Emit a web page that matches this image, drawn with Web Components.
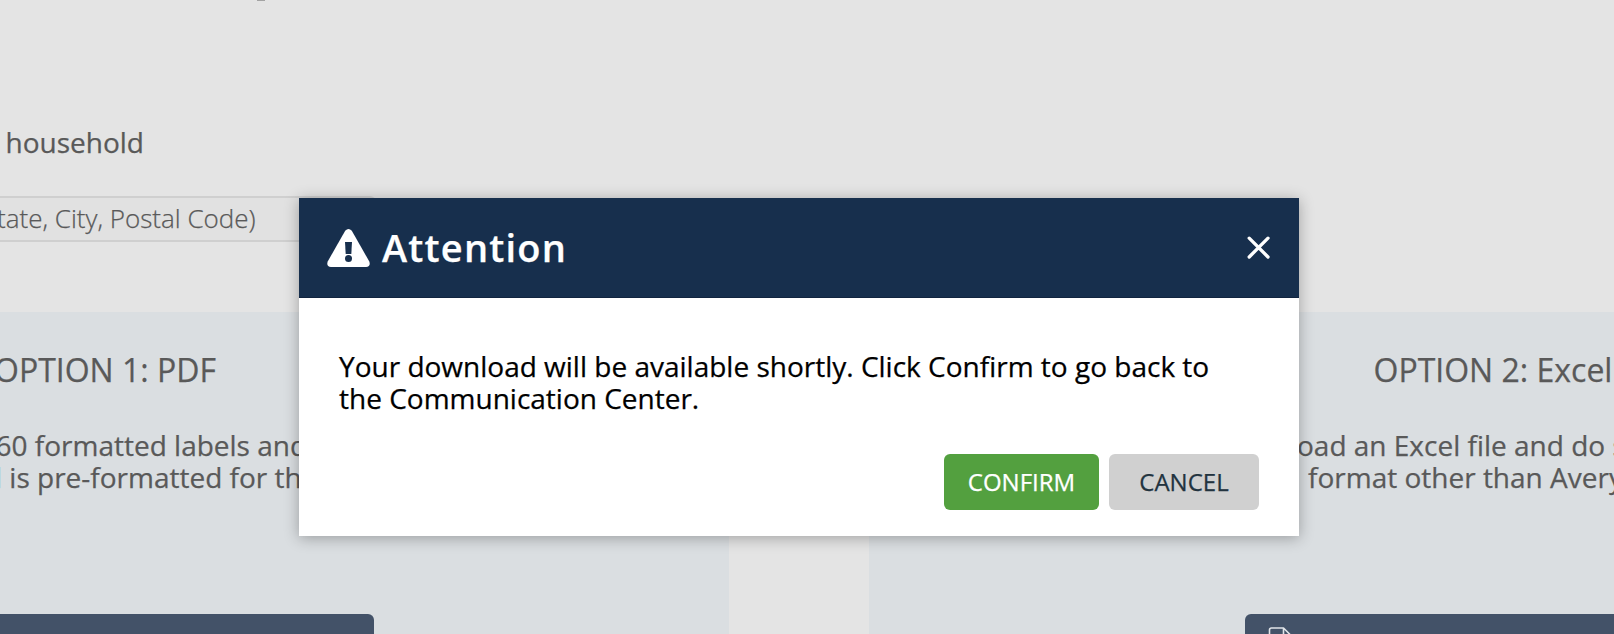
<!DOCTYPE html>
<html lang="en">
<head>
<meta charset="utf-8">
<title>Mailing Labels</title>
<style>
    body {
        margin: 0;
        width: 1614px;
        height: 634px;
        overflow: hidden;
        background: #e4e4e4;
        color: #595959;
        font-family: "Open Sans", "Noto Sans", sans-serif;
        font-size: 28px;
        line-height: 32px;
        -webkit-text-stroke: 0.25px;
    }
</style>
</head>
<body>
<label-page>
    <address-field slot="filters" label="household">tate, City, Postal Code)</address-field>
    <option-panel slot="options" style="--shift: -6px; --line1: -4.5px; --line2: -5px; --btn-right: 355px">
        <span slot="title">OPTION 1: PDF</span>
        <span slot="line1">60 formatted labels and</span>
        <span slot="line2">l is pre-formatted for the</span>
    </option-panel>
    <option-panel slot="options" style="--shift: 504.5px; --line1: 428px; --line2: 439px; --btn-left: 376px; --btn-radius: 6px 0 0 0" icon>
        <span slot="title">OPTION 2: Excel</span>
        <span slot="line1">oad an Excel file and do s</span>
        <span slot="line2">format other than Avery</span>
    </option-panel>
</label-page>

<attention-dialog heading="Attention">
    Your download will be available shortly. Click Confirm to go back to the Communication Center.
    <dialog-button slot="actions" kind="confirm">CONFIRM</dialog-button>
    <dialog-button slot="actions" kind="cancel">CANCEL</dialog-button>
</attention-dialog>

<script>
class LabelPage extends HTMLElement {
    connectedCallback() {
        this.attachShadow({ mode: 'open' });
        this.shadowRoot.innerHTML = `
            <style>
                :host {
                    display: flex;
                    flex-direction: column;
                    height: 634px;
                    overflow: hidden;
                }

                .filters {
                    height: 312px;
                    flex: none;
                }

                /* bottom of the page title, scrolled out of view */
                .title-edge {
                    width: 8px;
                    height: 1px;
                    margin-left: 257px;
                    background: #a3a3a3;
                }

                .options {
                    display: grid;
                    grid-template-columns: 729px 745px;
                    gap: 140px;
                    flex: 1;
                }
            </style>
            <div class="filters">
                <div class="title-edge"></div>
                <slot name="filters"></slot>
            </div>
            <div class="options"><slot name="options"></slot></div>
        `;
    }
}

class AddressField extends HTMLElement {
    connectedCallback() {
        this.attachShadow({ mode: 'open' });
        this.shadowRoot.innerHTML = `
            <style>
                :host {
                    display: block;
                    padding-top: 125px;
                }

                .label {
                    padding-left: 5.5px;
                    height: 32px;
                    margin-bottom: 38px;
                }

                .field {
                    box-sizing: border-box;
                    width: 376px;
                    height: 46px;
                    border: 2px solid #cfcfcf;
                    border-left: 0;
                    border-radius: 0 6px 6px 0;
                    background: #e1e1e1;
                    font-size: 26px;
                    font-weight: 300;
                    line-height: 40px;
                    white-space: nowrap;
                    text-indent: -3px;
                }
            </style>
            <div class="label">${this.getAttribute('label')}</div>
            <div class="field"><slot></slot></div>
        `;
    }
}

class OptionPanel extends HTMLElement {
    connectedCallback() {
        const icon = this.hasAttribute('icon') ? `
            <svg width="28" height="32" viewBox="0 0 28 32" fill="none" stroke="#e1e4e8" stroke-width="1.6" stroke-linejoin="round">
                <path d="M1.5 31V3q0-2 2-2h12l8 8v22H3.5q-2 0-2-2M15.5 1v8h8"/>
            </svg>` : '';
        this.attachShadow({ mode: 'open' });
        this.shadowRoot.innerHTML = `
            <style>
                :host {
                    display: flex;
                    flex-direction: column;
                    background: #dadee1;
                    overflow: hidden;
                    white-space: nowrap;
                }

                .title {
                    margin: 38px 0 39px var(--shift);
                    font-size: 32px;
                    line-height: 40px;
                }

                .line1 {
                    margin-left: var(--line1);
                    height: 32px;
                }

                .line2 {
                    margin-left: var(--line2);
                    height: 32px;
                }

                .download {
                    box-sizing: border-box;
                    height: 56px;
                    flex: none;
                    margin: 121px var(--btn-right, 0) 0 var(--btn-left, 0);
                    padding: 13px 23px;
                    border-radius: var(--btn-radius, 0 6px 0 0);
                    background: #435268;
                }

                svg {
                    display: block;
                }
            </style>
            <div class="title"><slot name="title"></slot></div>
            <div class="line1"><slot name="line1"></slot></div>
            <div class="line2"><slot name="line2"></slot></div>
            <div class="download">${icon}</div>
        `;
    }
}

class AttentionDialog extends HTMLElement {
    connectedCallback() {
        this.attachShadow({ mode: 'open' });
        this.shadowRoot.innerHTML = `
            <style>
                :host {
                    position: absolute;
                    left: 299px;
                    top: 198px;
                    width: 1000px;
                    height: 338px;
                    display: flex;
                    flex-direction: column;
                    background: #fff;
                    color: #000;
                    box-shadow: 0 2px 14px rgba(0, 0, 0, 0.3);
                }

                header {
                    box-sizing: border-box;
                    display: flex;
                    align-items: center;
                    height: 100px;
                    padding: 0 28px;
                    border-bottom: 1px solid #11243f;
                    background: #172f4d;
                    color: #fff;
                }

                h2 {
                    flex: 1;
                    margin: 0 0 2px 12px;
                    font-size: 38px;
                    font-weight: 600;
                    line-height: 50px;
                    letter-spacing: 1.2px;
                }

                .message {
                    padding: 52px 40px 0;
                    height: 104px;
                    box-sizing: content-box;
                    flex: none;
                }

                .actions {
                    display: flex;
                    justify-content: flex-end;
                    gap: 10px;
                    padding-right: 40px;
                }

                svg {
                    display: block;
                    flex: none;
                }
            </style>
            <header>
                <svg width="43" height="38" viewBox="0 0 43 38">
                    <path fill="#fff" d="M18.2 1.8Q21.5-1.8 24.8 1.8L42.3 32.5Q44 37.7 39 38H4Q-1 37.7.7 32.5Z"/>
                    <path fill="#172f4d" d="M18 13h7l-.7 12h-5.6z"/>
                    <circle cx="21.5" cy="29.5" r="3.5" fill="#172f4d"/>
                </svg>
                <h2>${this.getAttribute('heading')}</h2>
                <svg width="24" height="24" viewBox="0 0 24 24" stroke="#fff" stroke-width="3.3" stroke-linecap="round">
                    <path d="M2.2 2.2l18.8 18.8M21 2.2L2.2 21"/>
                </svg>
            </header>
            <div class="message"><slot></slot></div>
            <div class="actions"><slot name="actions"></slot></div>
        `;
    }
}

class DialogButton extends HTMLElement {
    connectedCallback() {
        this.attachShadow({ mode: 'open' });
        this.shadowRoot.innerHTML = `
            <style>
                :host {
                    display: flex;
                    align-items: center;
                    justify-content: center;
                    height: 56px;
                    border-radius: 6px;
                    font-size: 24px;
                    line-height: 32px;
                }

                :host([kind="confirm"]) {
                    width: 155px;
                    background: #53a03f;
                    color: #fff;
                }

                :host([kind="cancel"]) {
                    width: 150px;
                    background: #d0d0d0;
                    color: #22333f;
                }
            </style>
            <slot></slot>
        `;
    }
}

customElements.define('label-page', LabelPage);
customElements.define('address-field', AddressField);
customElements.define('option-panel', OptionPanel);
customElements.define('attention-dialog', AttentionDialog);
customElements.define('dialog-button', DialogButton);
</script>
</body>
</html>
